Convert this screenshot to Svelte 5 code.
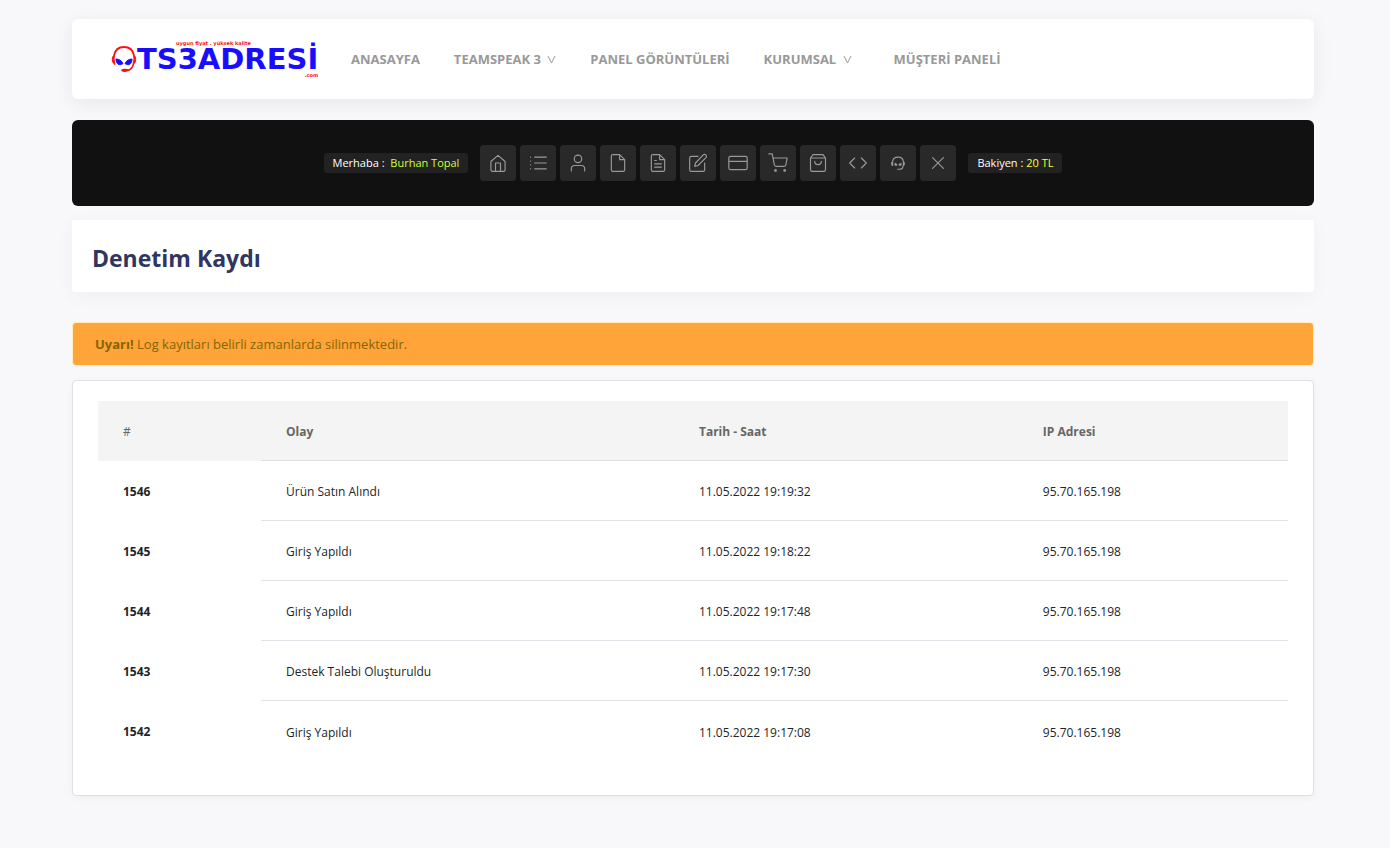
<script lang="ts">
    type Log = { id: number; event: string; date: string; ip: string };

    const menu = [
        { text: "ANASAYFA", sub: false },
        { text: "TEAMSPEAK 3", sub: true },
        { text: "PANEL GÖRÜNTÜLERİ", sub: false },
        { text: "KURUMSAL", sub: true },
    ];

    const user = "Burhan Topal";
    const balance = "20 TL";

    // 24x24 stroke icons
    const icons = [
        { label: "Panel", d: "M3.5 10.2 12 2.8l8.5 7.4V20a2 2 0 0 1-2 2h-13a2 2 0 0 1-2-2zM9 22V12h6v10" },
        { label: "Hizmetler", d: "M8 5h14M8 12h14M8 19h14M3 5h.1M3 9.7h.1M3 14.3h.1M3 19h.1" },
        { label: "Profil", d: "M20 21.5v-2.5a4 4 0 0 0-4-4H8a4 4 0 0 0-4 4v2.5M16.5 7a4.5 4.5 0 1 1-9 0a4.5 4.5 0 1 1 9 0" },
        { label: "Belgeler", d: "M14 2H6a2 2 0 0 0-2 2v16a2 2 0 0 0 2 2h12a2 2 0 0 0 2-2V8zM14 2v6h6" },
        { label: "Faturalar", d: "M14 2H6a2 2 0 0 0-2 2v16a2 2 0 0 0 2 2h12a2 2 0 0 0 2-2V8zM14 2v6h6M16 13H8M16 17H8M10 9H8" },
        { label: "Destek Talebi", d: "M12 4H4a2 2 0 0 0-2 2v14a2 2 0 0 0 2 2h14a2 2 0 0 0 2-2v-8M18 2.5a2.1 2.1 0 0 1 3.5 3L12 15l-4 1 1-4z" },
        { label: "Bakiye Yükle", d: "M3 4h18a2 2 0 0 1 2 2v12a2 2 0 0 1-2 2H3a2 2 0 0 1-2-2V6a2 2 0 0 1 2-2zM1 10h22" },
        { label: "Sepet", d: "M1 1h4l2.7 13.4a2 2 0 0 0 2 1.6h9.7a2 2 0 0 0 2-1.6L23 6H6M10 21a1 1 0 1 1-2 0a1 1 0 1 1 2 0M21 21a1 1 0 1 1-2 0a1 1 0 1 1 2 0" },
        { label: "Siparişler", d: "M6 2 3 6v14a2 2 0 0 0 2 2h14a2 2 0 0 0 2-2V6l-3-4zM3 6h18M16 10a4 4 0 0 1-8 0" },
        { label: "API", d: "M16 18l6-6-6-6M8 6l-6 6 6 6" },
        { label: "TeamSpeak", d: "M5.5 10.5C6 6.500 8.500 5 12 5s6 1.500 6.500 5.500M5.500 10.500c-1.500.5-1.500 4 0 4.500zM18.500 10.500c1.500.5 1.500 4 0 4.500zM8.500 12.500l2 1.200v.8h-2zM15.500 12.500l-2 1.200v.8h2zM18 15.500c0 2.500-1.500 4-4.500 4h-2" },
        { label: "Çıkış", d: "M18.5 5.5l-13 13M5.5 5.5l13 13" },
    ];

    const logs: Log[] = [
        { id: 1546, event: "Ürün Satın Alındı", date: "11.05.2022 19:19:32", ip: "95.70.165.198" },
        { id: 1545, event: "Giriş Yapıldı", date: "11.05.2022 19:18:22", ip: "95.70.165.198" },
        { id: 1544, event: "Giriş Yapıldı", date: "11.05.2022 19:17:48", ip: "95.70.165.198" },
        { id: 1543, event: "Destek Talebi Oluşturuldu", date: "11.05.2022 19:17:30", ip: "95.70.165.198" },
        { id: 1542, event: "Giriş Yapıldı", date: "11.05.2022 19:17:08", ip: "95.70.165.198" },
    ];
</script>

<div class="page">
    <header class="navbar">
        <a class="logo" href="#anasayfa">
            <svg class="headset" viewBox="0 0 26 28" aria-hidden="true">
                <path d="M3 10.500C4 5 7.500 2 13 2s9 3 10 8.500" fill="none" stroke="#f11" stroke-width="1.800" />
                <path d="M3.500 10C.5 11 .5 18 4 19.500L3 14zM22.500 10c3 1 3 8-.5 9.500L23 14z" fill="#f11" stroke="#f11" />
                <path d="M22.500 19c-1 4-3 6-6 6.500" fill="none" stroke="#f11" stroke-width="1.500" />
                <path d="M10 25c1-1.500 6-1.500 8-.5 0 3-7 3.500-8 .5z" fill="#f11" />
                <path d="M5 14c3 0 5.500 1.500 7 4.500-3.500 2.500-7 1-7-4.500zM21 14c-3 0-5.500 1.500-7 4.500 3.500 2.500 7 1 7-4.500z" fill="#1a0dff" stroke="#1a0dff" />
            </svg>
            <span class="wordmark">
                <small class="tagline">uygun fiyat . yüksek kalite</small>
                <span class="name">TS3ADRESİ</span>
                <small class="tld">.com</small>
            </span>
        </a>
        <nav class="menu">
            {#each menu as item (item.text)}
                <a href="#menu">
                    {item.text}
                    {#if item.sub}
                        <svg class="caret" viewBox="0 0 9 8" aria-hidden="true"><path d="M1 0l3.500 7L8 0" /></svg>
                    {/if}
                </a>
            {/each}
            <a class="client" href="#panel">MÜŞTERİ PANELİ</a>
        </nav>
    </header>

    <section class="toolbar">
        <span class="badge">Merhaba : &nbsp;<span class="user">{user}</span></span>
        <div class="icons">
            {#each icons as icon (icon.label)}
                <a class="icon" href="#hesap" aria-label={icon.label}>
                    <svg viewBox="0 0 24 24" aria-hidden="true"><path d={icon.d} /></svg>
                </a>
            {/each}
        </div>
        <span class="badge">Bakiyen : <span class="balance">{balance}</span></span>
    </section>

    <section class="title">
        <h1>Denetim Kaydı</h1>
    </section>

    <div class="alert" role="alert">
        <strong>Uyarı!</strong> Log kayıtları belirli zamanlarda silinmektedir.
    </div>

    <section class="card">
        <table>
            <thead>
                <tr>
                    <th class="num" scope="col">#</th>
                    <th class="event" scope="col">Olay</th>
                    <th class="date" scope="col">Tarih - Saat</th>
                    <th scope="col">IP Adresi</th>
                </tr>
            </thead>
            <tbody>
                {#each logs as log (log.id)}
                    <tr>
                        <th scope="row">{log.id}</th>
                        <td>{log.event}</td>
                        <td>{log.date}</td>
                        <td>{log.ip}</td>
                    </tr>
                {/each}
            </tbody>
        </table>
    </section>
</div>

<style>
    :global(body) {
        margin: 0;
        background: #f8f8fb;
    }

    * {
        box-sizing: border-box;
    }

    .page {
        padding: 19px 76px 52px 72px;
        font-family: "Segoe UI", "Open Sans", "Noto Sans", sans-serif;
        font-size: 12px;
        color: #212529;
    }

    a {
        color: inherit;
        text-decoration: none;
    }

    .navbar {
        display: flex;
        align-items: center;
        height: 80px;
        padding-left: 39px;
        background: #fff;
        border-radius: 6px;
        box-shadow: 0 4px 20px rgba(0, 0, 0, 0.07);
    }
    .logo {
        display: flex;
        align-items: center;
        width: 210px;
        margin-right: 30px;
    }
    .headset {
        width: 26px;
        height: 28px;
        flex: none;
    }
    .wordmark {
        display: flex;
        flex-direction: column;
        font-family: "DejaVu Sans", sans-serif;
        font-weight: bold;
        color: #f11;
    }
    .name {
        font-size: 29px;
        line-height: 26px;
        color: #1a0dff;
    }
    .tagline,
    .tld {
        font-size: 5px;
        line-height: 6px;
    }
    .tagline {
        padding-left: 39px;
    }
    .tld {
        text-align: right;
    }

    .menu {
        display: flex;
        gap: 34px;
        font-size: 13px;
        font-weight: bold;
        line-height: 20px;
        color: #999;
        white-space: nowrap;
    }
    .client {
        margin-left: 8px;
    }
    .caret {
        width: 9px;
        height: 8px;
        margin-left: 3px;
        fill: none;
        stroke: #999;
    }

    .toolbar {
        display: flex;
        justify-content: center;
        align-items: center;
        gap: 12px;
        margin-top: 21px;
        padding: 25px;
        background: #111;
        border-radius: 6px;
    }
    .badge {
        padding: 2px 9px;
        background: #222;
        border-radius: 3px;
        color: #fff;
        font-size: 11px;
        line-height: 16px;
        white-space: nowrap;
    }
    .user {
        color: #cf3;
    }
    .balance {
        color: #ff3;
    }
    .icons {
        display: flex;
        gap: 4px;
    }
    .icon {
        display: flex;
        align-items: center;
        justify-content: center;
        width: 36px;
        height: 36px;
        background: #292929;
        border-radius: 4px;
    }
    .icon svg {
        width: 20px;
        height: 20px;
        fill: none;
        stroke: #999;
        stroke-width: 1.4;
        stroke-linecap: round;
        stroke-linejoin: round;
    }

    .title {
        margin-top: 14px;
        padding: 20px;
        background: #fff;
        border-radius: 3px;
        box-shadow: 0 4px 20px rgba(0, 0, 0, 0.04);
    }
    h1 {
        margin: 0;
        padding-top: 4px;
        color: #2f365f;
        font-size: 23px;
        line-height: 28px;
    }

    .alert {
        margin-top: 30px;
        padding: 11px 22px;
        background: #ffa438;
        border: 1px solid #ffeeba;
        border-radius: 4px;
        color: #856404;
        font-size: 13px;
        line-height: 20px;
    }

    .card {
        margin-top: 14px;
        padding: 20px 25px 34px;
        background: #fff;
        border: 1px solid #dfdfe1;
        border-radius: 4px;
        box-shadow: 0 2px 8px rgba(0, 0, 0, 0.04);
    }
    table {
        width: 100%;
        border-collapse: separate;
        border-spacing: 0;
        table-layout: fixed;
    }
    th,
    td {
        height: 60px;
        padding: 0 25px;
        text-align: left;
    }
    thead th {
        background: #f4f4f4;
        color: #666;
    }
    tr > :not(:first-child) {
        padding-top: 2px;
        border-bottom: 1px solid #dee2e6;
    }
    tbody tr:last-child > td {
        border-bottom: none;
    }
    .num {
        width: 13.7%;
        font-weight: normal;
    }
    .event {
        width: 34.7%;
    }
    .date {
        width: 28.9%;
    }
</style>
